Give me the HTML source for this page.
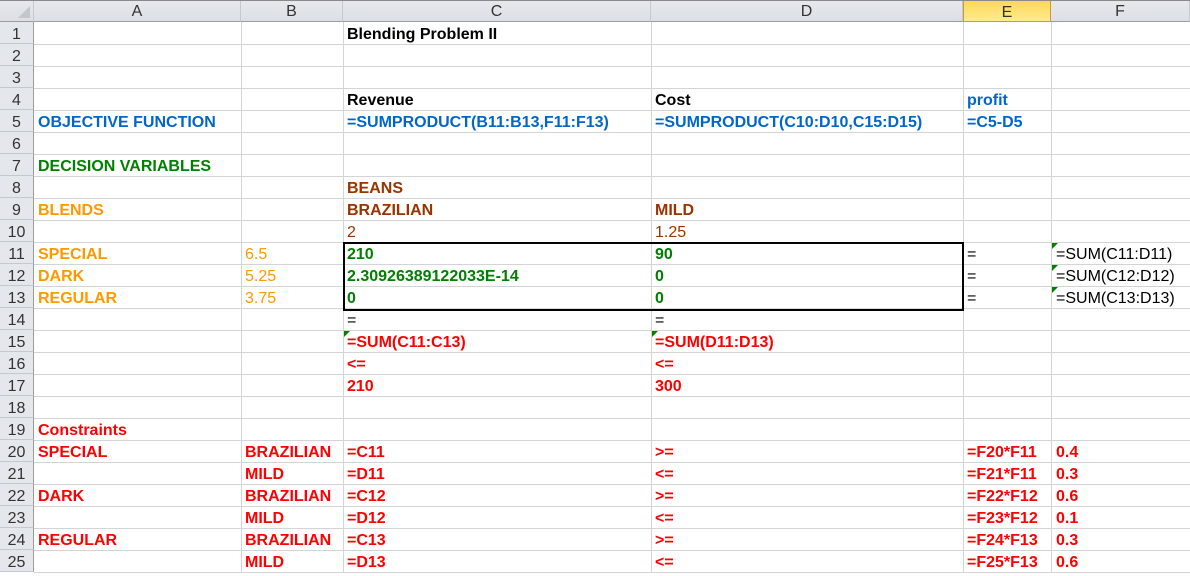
<!DOCTYPE html>
<html><head><meta charset="utf-8"><style>
*{margin:0;padding:0;box-sizing:border-box}
body{width:1190px;height:573px;overflow:hidden;background:#fff;font-family:"Liberation Sans",Arial,sans-serif;position:relative}
.v{position:absolute;top:22px;bottom:0;width:1px;background:#d4d4d4}
.h{position:absolute;left:0;right:0;height:1px;background:#d4d4d4}
.ch{position:absolute;top:0;height:22px;background:linear-gradient(#e6e9ee,#dcdfe4);border-right:1px solid #c5c9cf;border-bottom:1px solid #9c9c9c;text-align:center;line-height:24px;font-size:16px;color:#333}
.rh{position:absolute;left:0;width:34px;height:22px;background:#e4e7ec;border-bottom:1px solid #c5c9cf;border-right:1px solid #9c9c9c;text-align:center;line-height:25px;font-size:16px;color:#333}
.c{position:absolute;height:22px;line-height:26px;font-size:16px;padding-left:4px;white-space:nowrap}
.b{font-weight:bold}
.bl{color:#0066cc}.gr{color:#008000}.or{color:#ff9900}.br{color:#993300}.rd{color:#ff0000}.bk{color:#000}
.t{position:absolute;width:0;height:0;border-top:6px solid #008000;border-right:6px solid transparent}
</style></head><body>
<div class="ch" style="left:0;width:34px;border-top:none"></div>
<div class="ch" style="left:34px;width:207px">A</div>
<div class="ch" style="left:241px;width:102px">B</div>
<div class="ch" style="left:343px;width:308px">C</div>
<div class="ch" style="left:651px;width:312px">D</div>
<div class="ch" style="left:963px;width:88px;background:linear-gradient(#ffd75a,#ffec8c);border:1px solid #c89a3a">E</div>
<div class="ch" style="left:1051px;width:139px">F</div>
<div style="position:absolute;left:0;top:0;width:1190px;height:1px;background:#8a8a8a"></div>
<div style="position:absolute;left:18px;top:6px;width:0;height:0;border-left:12px solid transparent;border-bottom:12px solid #c3c7cc"></div>
<div id="g"></div>
<div style="position:absolute;left:343px;top:242px;width:621px;height:69px;border:2px solid #000"></div>
<div class="t" style="left:1052px;top:243px"></div>
<div class="t" style="left:1052px;top:265px"></div>
<div class="t" style="left:1052px;top:287px"></div>
<div class="t" style="left:344px;top:331px"></div>
<div class="t" style="left:652px;top:331px"></div>
<script>
var X=[0,34,241,343,651,963,1051,1190],h='';
for(var i=1;i<=25;i++){h+='<div class="rh" style="top:'+(22*i)+'px">'+i+'</div>';h+='<div class="h" style="left:34px;top:'+(22*i+22)+'px"></div>';}
for(var j=2;j<7;j++)h+='<div class="v" style="left:'+X[j]+'px"></div>';
var C=[
[1,3,'Blending Problem II','b bk'],
[4,3,'Revenue','b bk'],[4,4,'Cost','b bk'],[4,5,'profit','b bl'],
[5,1,'OBJECTIVE FUNCTION','b bl'],[5,3,'=SUMPRODUCT(B11:B13,F11:F13)','b bl'],[5,4,'=SUMPRODUCT(C10:D10,C15:D15)','b bl'],[5,5,'=C5-D5','b bl'],
[7,1,'DECISION VARIABLES','b gr'],
[8,3,'BEANS','b br'],
[9,1,'BLENDS','b or'],[9,3,'BRAZILIAN','b br'],[9,4,'MILD','b br'],
[10,3,'2','br'],[10,4,'1.25','br'],
[11,1,'SPECIAL','b or'],[11,2,'6.5','or'],[11,3,'210','b gr'],[11,4,'90','b gr'],[11,5,'=','bk'],[11,6,'=SUM(C11:D11)','bk'],
[12,1,'DARK','b or'],[12,2,'5.25','or'],[12,3,'2.30926389122033E-14','b gr'],[12,4,'0','b gr'],[12,5,'=','bk'],[12,6,'=SUM(C12:D12)','bk'],
[13,1,'REGULAR','b or'],[13,2,'3.75','or'],[13,3,'0','b gr'],[13,4,'0','b gr'],[13,5,'=','bk'],[13,6,'=SUM(C13:D13)','bk'],
[14,3,'=','bk'],[14,4,'=','bk'],
[15,3,'=SUM(C11:C13)','b rd'],[15,4,'=SUM(D11:D13)','b rd'],
[16,3,'<=','b rd'],[16,4,'<=','b rd'],
[17,3,'210','b rd'],[17,4,'300','b rd'],
[19,1,'Constraints','b rd'],
[20,1,'SPECIAL','b rd'],[20,2,'BRAZILIAN','b rd'],[20,3,'=C11','b rd'],[20,4,'>=','b rd'],[20,5,'=F20*F11','b rd'],[20,6,'0.4','b rd'],
[21,2,'MILD','b rd'],[21,3,'=D11','b rd'],[21,4,'<=','b rd'],[21,5,'=F21*F11','b rd'],[21,6,'0.3','b rd'],
[22,1,'DARK','b rd'],[22,2,'BRAZILIAN','b rd'],[22,3,'=C12','b rd'],[22,4,'>=','b rd'],[22,5,'=F22*F12','b rd'],[22,6,'0.6','b rd'],
[23,2,'MILD','b rd'],[23,3,'=D12','b rd'],[23,4,'<=','b rd'],[23,5,'=F23*F12','b rd'],[23,6,'0.1','b rd'],
[24,1,'REGULAR','b rd'],[24,2,'BRAZILIAN','b rd'],[24,3,'=C13','b rd'],[24,4,'>=','b rd'],[24,5,'=F24*F13','b rd'],[24,6,'0.3','b rd'],
[25,2,'MILD','b rd'],[25,3,'=D13','b rd'],[25,4,'<=','b rd'],[25,5,'=F25*F13','b rd'],[25,6,'0.6','b rd']];
C.forEach(function(c){var t=c[2].replace(/</g,'&lt;').replace(/>/g,'&gt;');h+='<div class="c '+c[3]+'" style="top:'+(22*c[0])+'px;left:'+(X[c[1]]+(c[1]==6?1:0))+'px">'+t+'</div>';});
document.getElementById('g').innerHTML=h;
</script>
</body></html>
